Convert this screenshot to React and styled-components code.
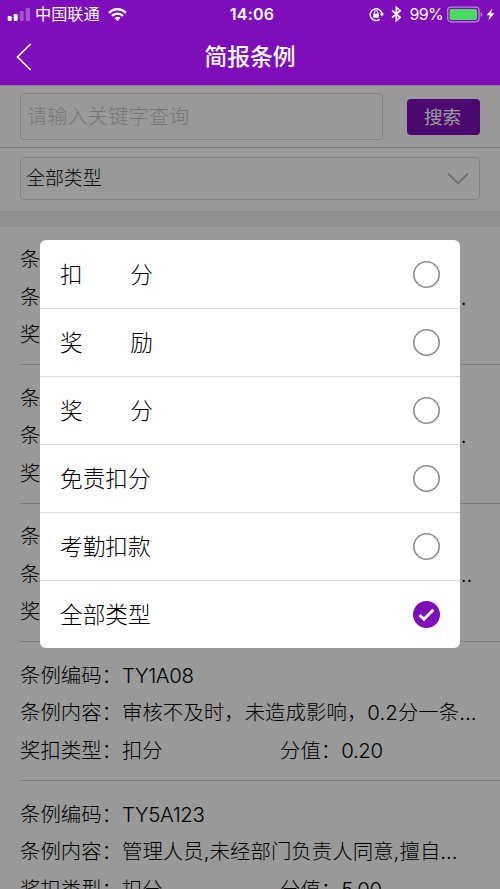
import React from 'react';
import styled, { createGlobalStyle } from 'styled-components';

const PURPLE = '#7d0eb9';

const GlobalStyle = createGlobalStyle`
  *, *::before, *::after { box-sizing: border-box; }
  body {
    margin: 0;
    overflow: hidden;
    background: #fff;
    color: #000;
    font-family: Inter, "Noto Sans CJK SC", sans-serif;
    font-weight: 300;
  }
`;

const Screen = styled.div`
  position: relative;
  height: 889px;
  overflow: hidden;
  display: flex;
  flex-direction: column;
`;

const Header = styled.header`
  flex: none;
  height: 85px;
  background: ${PURPLE};
  color: #fff;
`;

const StatusBar = styled.div`
  height: 28px;
  display: grid;
  grid-template-columns: 1fr auto 1fr;
  align-items: center;
  padding: 0 5px 0 7px;
  font-size: 16.2px;
  line-height: 28px;
`;

const StatusGroup = styled.div`
  display: flex;
  align-items: center;
  height: 28px;
  justify-content: ${(p) => (p.$end ? 'flex-end' : 'flex-start')};

  svg { display: block; flex: none; }
`;

const Carrier = styled.span`
  margin: 0 8px 0 4px;
  font-weight: 400;
`;

const Clock = styled.span`
  padding-left: 2px;
  font-weight: 600;
  font-size: 16px;
  letter-spacing: 0.2px;
`;

const Percent = styled.span`
  margin: 0 4px 0 8px;
  font-weight: 400;
  font-size: 16px;
  letter-spacing: -0.7px;
`;

const NavBar = styled.div`
  height: 57px;
  display: grid;
  grid-template-columns: 60px 1fr 60px;
  align-items: center;
`;

const BackButton = styled.button`
  display: flex;
  padding: 0 0 0 16px;
  border: 0;
  background: none;
`;

const Title = styled.h1`
  margin: 0;
  text-align: center;
  font-size: 22.8px;
  line-height: 56px;
  font-weight: 500;
`;

const Body = styled.main`
  position: relative;
  flex: 1;
  min-height: 0;
  overflow: hidden;
  border-top: 1px solid #9279a5;
`;

const SearchRow = styled.div`
  display: flex;
  align-items: center;
  justify-content: space-between;
  height: 62px;
  padding: 0 20px;
  border-bottom: 1px solid #d0d0d0;
`;

const SearchField = styled.div`
  width: 363px;
  height: 47px;
  padding: 0 6px;
  border: 1px solid #d8d8d8;
  border-radius: 4px;
  color: #c7c7cd;
  font-size: 20.3px;
  line-height: 45px;
`;

const SearchButton = styled.button`
  width: 73px;
  height: 36px;
  padding: 0 2px 0 0;
  border: 0;
  border-radius: 4px;
  background: ${PURPLE};
  color: #fff;
  font: 400 18.6px/36px Inter, "Noto Sans CJK SC", sans-serif;
`;

const FilterRow = styled.div`
  padding: 9px 20px 10.5px;
`;

const Select = styled.div`
  display: flex;
  align-items: center;
  justify-content: space-between;
  height: 43px;
  padding: 0 10px 0 5px;
  border: 1px solid #d8d8d8;
  border-radius: 4px;
  font-size: 18.9px;
  line-height: 43px;
`;

const Band = styled.div`
  height: 16px;
  background: #efefef;
`;

const Card = styled.article`
  height: 138.67px;
  margin-left: 20px;
  padding-top: 14.6px;
  border-bottom: 1px solid #d0d0d0;
  font-size: 20.4px;
  line-height: 37.4px;
  white-space: nowrap;
`;

const Line = styled.div`
  display: flex;
`;

const Cell = styled.span`
  width: ${(p) => (p.$half ? '260px' : 'auto')};
`;

const Value = styled.span`
  letter-spacing: -0.35px;
`;

const Content = styled.span`
  letter-spacing: 0.06px;
`;

const Overlay = styled.div`
  position: absolute;
  inset: 0;
  background: rgba(0, 0, 0, 0.4);
`;

const Dialog = styled.div`
  margin: 154px 40px 0;
  border-radius: 6px;
  background: #fff;
  overflow: hidden;
`;

const Option = styled.div`
  display: flex;
  align-items: center;
  justify-content: space-between;
  height: 68px;
  padding: 0 20px;
  font-size: 22.7px;
  line-height: 67px;

  & + & { border-top: 1px solid #dcdcdc; }
`;

const OptionLabel = styled.span`
  display: flex;
  justify-content: space-between;
  width: 93px;
`;

const Radio = styled.span`
  display: flex;
  align-items: center;
  justify-content: center;
  width: 27px;
  height: 27px;
  border-radius: 50%;
  box-shadow: ${(p) => (p.$checked ? 'none' : 'inset 0 0 0 1.6px #8c8c8c')};
  background: ${(p) => (p.$checked ? PURPLE : '#fff')};
`;

const Signal = () => (
  <svg width="24" height="15" viewBox="0 0 24 15" fill="#fff">
    <rect x="0.7" y="9" width="4" height="5" rx="1.3" />
    <rect x="6.7" y="7" width="4" height="7" rx="1.3" />
    <rect x="12.7" y="4" width="4" height="10" rx="1.3" opacity="0.3" />
    <rect x="18.7" y="1" width="4.3" height="13" rx="1.3" opacity="0.3" />
  </svg>
);

const Wifi = () => (
  <svg width="19" height="15" viewBox="0 0 20 15" fill="none" stroke="#fff" strokeWidth="2.5">
    <path d="M1.2 5.7a12.4 12.4 0 0 1 17.6 0" />
    <path d="M4.2 9a8.2 8.2 0 0 1 11.6 0" />
    <path d="M10 14.4L6.9 11.3a4.4 4.4 0 0 1 6.2 0Z" fill="#fff" stroke="none" />
  </svg>
);

const RotationLock = () => (
  <svg width="16" height="15" viewBox="0 0 17 16" fill="none" stroke="#fff" strokeWidth="1.5">
    <path d="M11.4 13.2A6.3 6.3 0 1 1 13.8 7.2" />
    <path d="M11.3 7h5l-2.5 3.2Z" fill="#fff" stroke="none" />
    <rect x="4.5" y="7" width="6" height="4.5" rx="0.5" fill="#fff" stroke="none" />
    <path d="M5.7 7.3V5.9a1.8 1.8 0 0 1 3.6 0v1.4" strokeWidth="1.1" />
  </svg>
);

const Bluetooth = () => (
  <svg width="11" height="16" viewBox="0 0 11 16" fill="none" stroke="#fff" strokeWidth="1.6">
    <path d="M1 4.3l8.2 7L5.3 14.6V1.4l3.9 3.3L1 11.7" />
  </svg>
);

const Battery = () => (
  <svg width="36" height="17" viewBox="0 0 36 17">
    <rect x="0.7" y="1.2" width="31.3" height="14.6" rx="3.2" fill="none" stroke="#fff" strokeOpacity="0.5" strokeWidth="1.3" />
    <rect x="2.6" y="3.1" width="27.4" height="10.8" rx="1.6" fill="#4cd964" />
    <path d="M33.6 6v5c1-.4 1.6-1.3 1.6-2.5S34.6 6.4 33.6 6Z" fill="#fff" fillOpacity="0.5" />
  </svg>
);

const Bolt = () => (
  <svg width="9" height="13" viewBox="0 0 9 13" fill="#fff">
    <path d="M6.3 .5L.6 7.3h3.2L2.3 12.5 8.3 5.3H5Z" />
  </svg>
);

const BoltSlot = styled.span`
  margin-left: 3px;
`;

const LockSlot = styled.span`
  margin-right: 6px;
`;

const options = ['扣分', '奖励', '奖分', '免责扣分', '考勤扣款', '全部类型'];

const records = [
  { code: 'TY1A05', content: '未按规定时间提交工作汇报以及材料…', type: '扣分', score: '0.50' },
  { code: 'TY1A06', content: '未及时反馈问题处理进展并造成延误…', type: '扣分', score: '1.00' },
  { code: 'TY1A07', content: '审核资料不完整,影响后续工作的开展…', type: '扣分', score: '0.50' },
  { code: 'TY1A08', content: '审核不及时，未造成影响，0.2分一条…', type: '扣分', score: '0.20' },
  { code: 'TY5A123', content: '管理人员,未经部门负责人同意,擅自…', type: '扣分', score: '5.00' },
];

export default function App() {
  const selected = '全部类型';
  return (
    <>
      <GlobalStyle />
      <Screen>
        <Header>
          <StatusBar>
            <StatusGroup>
              <Signal />
              <Carrier>中国联通</Carrier>
              <Wifi />
            </StatusGroup>
            <Clock>14:06</Clock>
            <StatusGroup $end>
              <LockSlot><RotationLock /></LockSlot>
              <Bluetooth />
              <Percent>99%</Percent>
              <Battery />
              <BoltSlot><Bolt /></BoltSlot>
            </StatusGroup>
          </StatusBar>
          <NavBar>
            <BackButton aria-label="返回">
              <svg width="16" height="28" viewBox="0 0 16 28" fill="none" stroke="#fff" strokeWidth="1.7">
                <path d="M14.7 1L1.5 14l13.2 13" />
              </svg>
            </BackButton>
            <Title>简报条例</Title>
          </NavBar>
        </Header>
        <Body>
          <SearchRow>
            <SearchField>请输入关键字查询</SearchField>
            <SearchButton>搜索</SearchButton>
          </SearchRow>
          <FilterRow>
            <Select>
              {selected}
              <svg width="22" height="13" viewBox="0 0 22 13" fill="none" stroke="#bdbdbd" strokeWidth="1.8">
                <path d="M1 1.5l10 10L21 1.5" />
              </svg>
            </Select>
          </FilterRow>
          <Band />
          {records.map((r) => (
            <Card key={r.code}>
              <Line>条例编码：<Value>{r.code}</Value></Line>
              <Line>条例内容：<Content>{r.content}</Content></Line>
              <Line>
                <Cell $half>奖扣类型：{r.type}</Cell>
                <Cell>分值：<Value>{r.score}</Value></Cell>
              </Line>
            </Card>
          ))}
          <Overlay>
            <Dialog role="dialog">
              {options.map((label) => (
                <Option key={label}>
                  <OptionLabel>
                    {label.length === 2 ? [...label].map((c) => <span key={c}>{c}</span>) : label}
                  </OptionLabel>
                  <Radio $checked={label === selected}>
                    {label === selected && (
                      <svg width="17" height="14" viewBox="0 0 17 14" fill="none" stroke="#fff" strokeWidth="2.8">
                        <path d="M1.5 7l4.500 4.300L15.300 1.800" />
                      </svg>
                    )}
                  </Radio>
                </Option>
              ))}
            </Dialog>
          </Overlay>
        </Body>
      </Screen>
    </>
  );
}
